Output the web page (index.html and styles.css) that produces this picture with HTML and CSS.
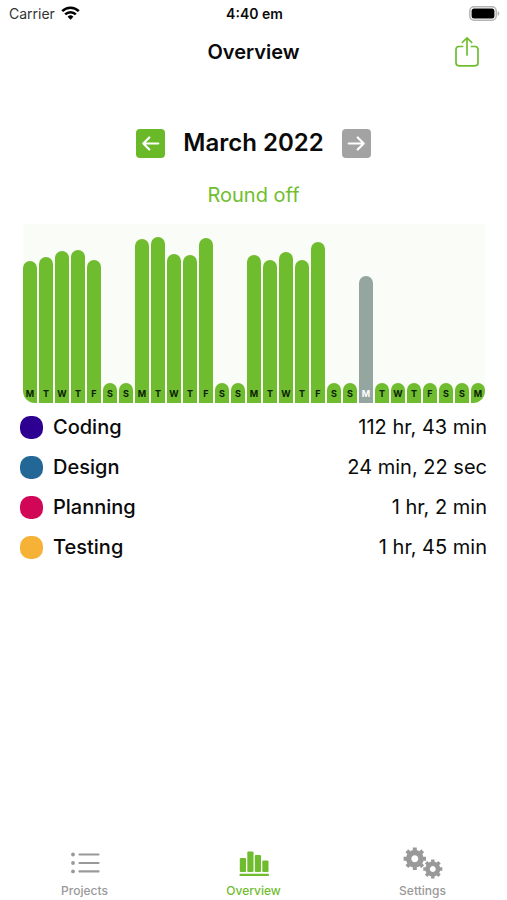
FILE: index.html
```html
<!DOCTYPE html>
<html lang="en">
<head>
<meta charset="utf-8">
<meta name="viewport" content="width=device-width, initial-scale=1">
<title>Overview</title>
<link rel="stylesheet" href="styles.css">
</head>
<body>
<div class="status">
  <div class="carrier"><span>Carrier</span>
    <svg width="19" height="14" viewBox="0 0 19 14" fill="none" stroke="#000" stroke-width="2.6" aria-hidden="true"><path d="M1.2 5.2a11.8 11.8 0 0 1 16.6 0M4.2 8.4a7.5 7.5 0 0 1 10.6 0"/><path d="M9.500 13.700 6.600 10.800a4.100 4.100 0 0 1 5.800 0z" fill="#000" stroke="none"/></svg>
  </div>
  <time class="clock">4:40 em</time>
  <svg class="battery" width="31" height="15" viewBox="0 0 31 15" aria-hidden="true"><rect x=".8" y=".8" width="26.400" height="13.400" rx="4.200" fill="#fff" stroke="#b4b4b4" stroke-width="1.500"/><rect x="2.600" y="2.600" width="22.800" height="9.800" rx="2.500"/><path d="M28.600 5.200c2.400.7 2.400 3.900 0 4.600z" fill="#b4b4b4"/></svg>
</div>
<header class="bar">
  <h1>Overview</h1>
  <button class="share" type="button" aria-label="Share">
    <svg width="26" height="32" viewBox="0 0 26 32" fill="none" stroke="#6fbe2e" stroke-width="1.700" stroke-linecap="round" stroke-linejoin="round"><path d="M8.600 10.500H5a3 3 0 0 0-3 3v13.300a3 3 0 0 0 3 3h16a3 3 0 0 0 3-3V13.500a3 3 0 0 0-3-3h-3.600M13 19V2M8.300 6.500 13 1.800l4.700 4.700"/></svg>
  </button>
</header>
<main>
  <div class="month">
    <button class="step" type="button" aria-label="Previous month"><svg width="29" height="29" viewBox="0 0 29 29"><path d="M22.300 14.500H7.500M13.300 8.500l-6 6 6 6"/></svg></button>
    <h2>March 2022</h2>
    <button class="step next" type="button" aria-label="Next month"><svg width="29" height="29" viewBox="0 0 29 29"><path d="M6.700 14.500h14.800M15.700 8.500l6 6-6 6"/></svg></button>
  </div>
  <button class="round" type="button">Round off</button>
  <div class="chart">
    <div class="day" style="height:142px">M</div><div class="day" style="height:146px">T</div><div class="day" style="height:152px">W</div><div class="day" style="height:153px">T</div><div class="day" style="height:143px">F</div><div class="day">S</div><div class="day">S</div>
    <div class="day" style="height:164px">M</div><div class="day" style="height:166px">T</div><div class="day" style="height:149px">W</div><div class="day" style="height:148px">T</div><div class="day" style="height:165px">F</div><div class="day">S</div><div class="day">S</div>
    <div class="day" style="height:148px">M</div><div class="day" style="height:143px">T</div><div class="day" style="height:151px">W</div><div class="day" style="height:143px">T</div><div class="day" style="height:161px">F</div><div class="day">S</div><div class="day">S</div>
    <div class="day today" style="height:127px">M</div><div class="day">T</div><div class="day">W</div><div class="day">T</div><div class="day">F</div><div class="day">S</div><div class="day">S</div>
    <div class="day">M</div>
  </div>
  <ul class="totals">
    <li><i class="dot coding"></i><b>Coding</b><span>112 hr, 43 min</span></li>
    <li><i class="dot design"></i><b>Design</b><span>24 min, 22 sec</span></li>
    <li><i class="dot planning"></i><b>Planning</b><span>1 hr, 2 min</span></li>
    <li><i class="dot testing"></i><b>Testing</b><span>1 hr, 45 min</span></li>
  </ul>
</main>
<nav class="tabs">
  <a href="#projects"><svg width="40" height="32" viewBox="0 0 40 32" fill="currentColor"><circle cx="8" cy="7.500" r="1.900"/><circle cx="8" cy="16" r="1.900"/><circle cx="8" cy="24.400" r="1.900"/><path d="M14.500 7.500h19M14.500 16h19M14.500 24.400h19" stroke="currentColor" stroke-width="2.200" stroke-linecap="round"/></svg>Projects</a>
  <a class="active" href="#overview" aria-current="page"><svg width="40" height="32" viewBox="0 0 40 32" fill="currentColor"><rect x="5.800" y="11" width="6.200" height="14" rx="1"/><rect x="13.300" y="4.500" width="6.200" height="20.500" rx="1"/><rect x="20.800" y="8" width="6.200" height="17" rx="1"/><rect x="28.300" y="13.500" width="6.200" height="11.500" rx="1"/><rect x="5.500" y="26.700" width="29.500" height="2.300" rx=".8"/></svg>Overview</a>
  <a href="#settings"><svg width="40" height="32" viewBox="0 0 40 32">
    <defs><g id="gear"><circle r="6.200" fill="none" stroke="currentColor" stroke-width="5.400"/><g stroke="currentColor" stroke-width="4"><path d="M0-11.200V-7M0 11.200V7M-11.200 0H-7M11.200 0H7"/><path transform="rotate(45)" d="M0-11.200V-7M0 11.200V7M-11.200 0H-7M11.200 0H7"/></g></g></defs>
    <use href="#gear" transform="translate(11.800 11.700)"/><use href="#gear" transform="translate(29.800 22) scale(.85)"/></svg>Settings</a>
</nav>
</body>
</html>
```
FILE: styles.css
```css
* { box-sizing: border-box; }
body {
  margin: 0;
  min-height: 100vh;
  display: flex;
  flex-direction: column;
  background: #fff;
  color: #0a0a0a;
  font-family: Inter, "Liberation Sans", sans-serif;
}
button { border: 0; padding: 0; background: none; font: inherit; cursor: pointer; }
svg { display: block; }
h1, h2 { margin: 0; font-weight: 600; }

.status {
  display: grid;
  grid-template-columns: 1fr auto 1fr;
  align-items: center;
  height: 26px;
  padding: 0 7px 0 9px;
  font-size: 14px;
}
.carrier { display: flex; align-items: center; gap: 6px; color: #333; }
.clock { font-weight: 600; }
.battery { justify-self: end; }

.bar {
  display: grid;
  grid-template-columns: 1fr auto 1fr;
  align-items: center;
  height: 52px;
  padding: 0 27px;
}
h1 { grid-column: 2; font-size: 20px; line-height: 24px; }
.share { justify-self: end; }

main { flex: 1; padding: 50px 20px 0; }
.month { display: flex; justify-content: center; align-items: center; gap: 18px; }
h2 { font-size: 24px; line-height: 30px; }
.step { border-radius: 4px; background: #69b929; }
.next { background: #a3a3a3; }
.step path { fill: none; stroke: #fff; stroke-width: 2.2; stroke-linecap: round; stroke-linejoin: round; }
.round {
  display: block;
  margin: 25px auto 17px;
  color: #6fbe2e;
  font-size: 20px;
  line-height: 24px;
}

.chart {
  display: flex;
  align-items: flex-end;
  gap: 2px;
  height: 179px;
  margin: 0 2px 0 3px;
  border-radius: 0 0 12px 12px;
  overflow: hidden;
  background: #fafdf7;
}
.day {
  flex: 1;
  display: flex;
  align-items: flex-end;
  justify-content: center;
  height: 20px;
  padding-bottom: 3px;
  border-radius: 7px 7px 0 0;
  background: #6fbc2f;
  color: #0c1e04;
  font-size: 9px;
  line-height: 12px;
  font-weight: 700;
}
.today { background: #95a5a0; color: #fff; }

.totals { list-style: none; margin: 4px 0 0; padding: 0; }
.totals li {
  display: flex;
  align-items: center;
  height: 40px;
  font-size: 20px;
}
.totals b { flex: 1; margin-left: 10px; font-weight: 500; }
.dot { width: 23px; height: 23px; border-radius: 10px; }
.coding { background: #2d0091; }
.design { background: #226796; }
.planning { background: #d20657; }
.testing { background: #f5b236; }

.tabs { display: grid; grid-template-columns: repeat(3, 1fr); height: 54px; }
.tabs a {
  display: flex;
  flex-direction: column;
  align-items: center;
  gap: 4px;
  padding-top: 1px;
  color: #999;
  font-size: 12px;
  line-height: 16px;
  font-weight: 500;
  text-decoration: none;
}
.tabs .active { color: #6fbc2f; }
```
